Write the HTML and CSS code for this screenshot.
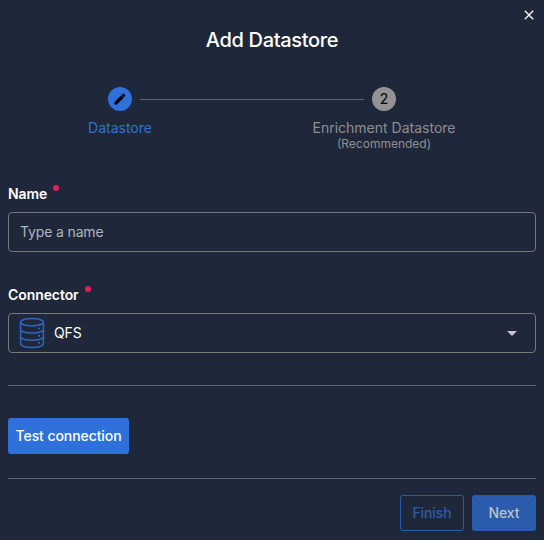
FILE: index.html
```html
<!DOCTYPE html>
<html lang="en">
<head>
<meta charset="utf-8">
<title>Add Datastore</title>
<link rel="stylesheet" href="styles.css">
</head>
<body>
<main class="dialog">
  <button class="close" aria-label="Close"><svg width="24" height="24" viewBox="0 0 24 24"><path d="M19 6.41L17.59 5 12 10.59 6.41 5 5 6.41 10.59 12 5 17.59 6.41 19 12 13.41 17.59 19 19 17.59 13.41 12z"/></svg></button>
  <h1 class="title">Add Datastore</h1>
  <div class="stepper">
    <div class="step active">
      <span class="bullet"><svg width="14" height="14" viewBox="0 0 24 24"><path d="M20.71 7.04c.39-.39.39-1.04 0-1.41l-2.34-2.34c-.37-.39-1.02-.39-1.41 0l-1.84 1.83 3.75 3.75M3 17.25V21h3.75L17.81 9.93l-3.75-3.75L3 17.25z"/></svg></span>
      <span class="step-label">Datastore</span>
    </div>
    <div class="line"></div>
    <div class="step">
      <span class="bullet">2</span>
      <span class="step-label">Enrichment Datastore</span>
      <small class="step-note">(Recommended)</small>
    </div>
  </div>
  <div class="field">
    <label class="label" for="name">Name<i class="required"></i></label>
    <input class="control" id="name" placeholder="Type a name">
  </div>
  <div class="field">
    <span class="label">Connector<i class="required"></i></span>
    <div class="control select">
      <svg class="db" width="26" height="32" viewBox="0 0 26 32"><ellipse cx="13" cy="5.2" rx="11.4" ry="3.7"/><path d="M1.6 5.2v21.6c0 2.1 5 3.7 11.4 3.7s11.4-1.6 11.4-3.7V5.2M1.6 12.6c0 2 5 3.4 11.4 3.4s11.4-1.4 11.4-3.4M1.6 19.8c0 2 5 3.4 11.4 3.4s11.4-1.4 11.4-3.4"/><g class="dots"><circle cx="20" cy="11.5" r="1.1"/><circle cx="20" cy="18.7" r="1.1"/><circle cx="20" cy="25.8" r="1.1"/></g></svg>
      <span class="value">QFS</span>
      <svg class="caret" width="24" height="24" viewBox="0 0 24 24"><path d="M7 10l5 5 5-5z"/></svg>
    </div>
  </div>
  <hr class="rule">
  <button class="btn primary test">Test connection</button>
  <hr class="rule">
  <footer class="actions">
    <button class="btn outline" disabled>Finish</button>
    <button class="btn primary" disabled>Next</button>
  </footer>
</main>
</body>
</html>
```
FILE: styles.css
```css
* { box-sizing: border-box; }
body {
  margin: 0;
  background: #1f273b;
  color: #fff;
  font: 14px/20px Inter, "Liberation Sans", sans-serif;
}
.dialog {
  position: relative;
  height: 540px;
  padding: 26px 8px 0;
  overflow: hidden;
}
.close {
  position: absolute;
  top: 7px;
  right: 7px;
  width: 16px;
  height: 16px;
  padding: 0;
  border: 0;
  background: none;
}
.close svg { display: block; width: 16px; height: 16px; fill: #fff; }
.title {
  margin: 0;
  font-size: 20px;
  line-height: 28px;
  font-weight: 500;
  letter-spacing: -.34px;
  text-align: center;
}
.stepper {
  display: flex;
  height: 68px;
  margin: 33px 0 0 100px;
}
.step {
  display: flex;
  flex-direction: column;
  align-items: center;
  width: 24px;
  color: #8f8f8f;
  white-space: nowrap;
}
.bullet {
  display: flex;
  align-items: center;
  justify-content: center;
  flex: none;
  width: 24px;
  height: 24px;
  margin-bottom: 7px;
  border-radius: 50%;
  background: #939393;
  color: #000;
}
.bullet svg { stroke: #000; stroke-width: .8; }
.active { color: #2f70da; }
.active .bullet { background: #2f70da; }
.step-note { font-size: 12px; line-height: 12px; }
.line {
  width: 224px;
  height: 1px;
  margin: 12px 8px 0;
  background: #5f6673;
}
.field { margin-top: 29px; }
.field + .field { margin-top: 33px; }
.label {
  display: flex;
  height: 20px;
  margin-bottom: 8px;
  font-weight: 600;
  letter-spacing: -.08px;
}
.required {
  width: 6px;
  height: 6px;
  margin: 1px 0 0 6px;
  border-radius: 50%;
  background: #e91e5a;
}
.control {
  display: flex;
  align-items: center;
  width: 100%;
  height: 40px;
  padding: 0 11px;
  border: 1px solid #79797a;
  border-radius: 4px;
  background: none;
  color: #fff;
  font: inherit;
}
input.control { padding-bottom: 2px; letter-spacing: -.14px; }
.control::placeholder { color: #b2b5bb; opacity: 1; }
.select { padding-left: 10px; }
.value { letter-spacing: -.1px; }
.db { margin-right: 9px; fill: none; stroke: #2d68bd; stroke-width: 1.5; }
.dots { fill: #2d68bd; stroke: none; }
.caret { margin-left: auto; fill: #c7c9ce; }
.rule {
  height: 1px;
  margin: 32px 0;
  border: 0;
  background: #5f6673;
}
.btn {
  height: 36px;
  padding: 0;
  border: 0;
  border-radius: 3px;
  font: 500 14px/20px Inter, "Liberation Sans", sans-serif;
  letter-spacing: -.08px;
}
.primary { background: #2f70da; color: #fff; }
.test { display: block; width: 121px; margin-bottom: -8px; }
.actions {
  display: flex;
  justify-content: flex-end;
  gap: 8px;
  margin-top: -16px;
}
.actions .btn { width: 64px; }
.actions .primary { background: #2b5bad; color: #bfc2c8; }
.outline { border: 1px solid #2b5bad; background: none; color: #2b5bad; }
```
